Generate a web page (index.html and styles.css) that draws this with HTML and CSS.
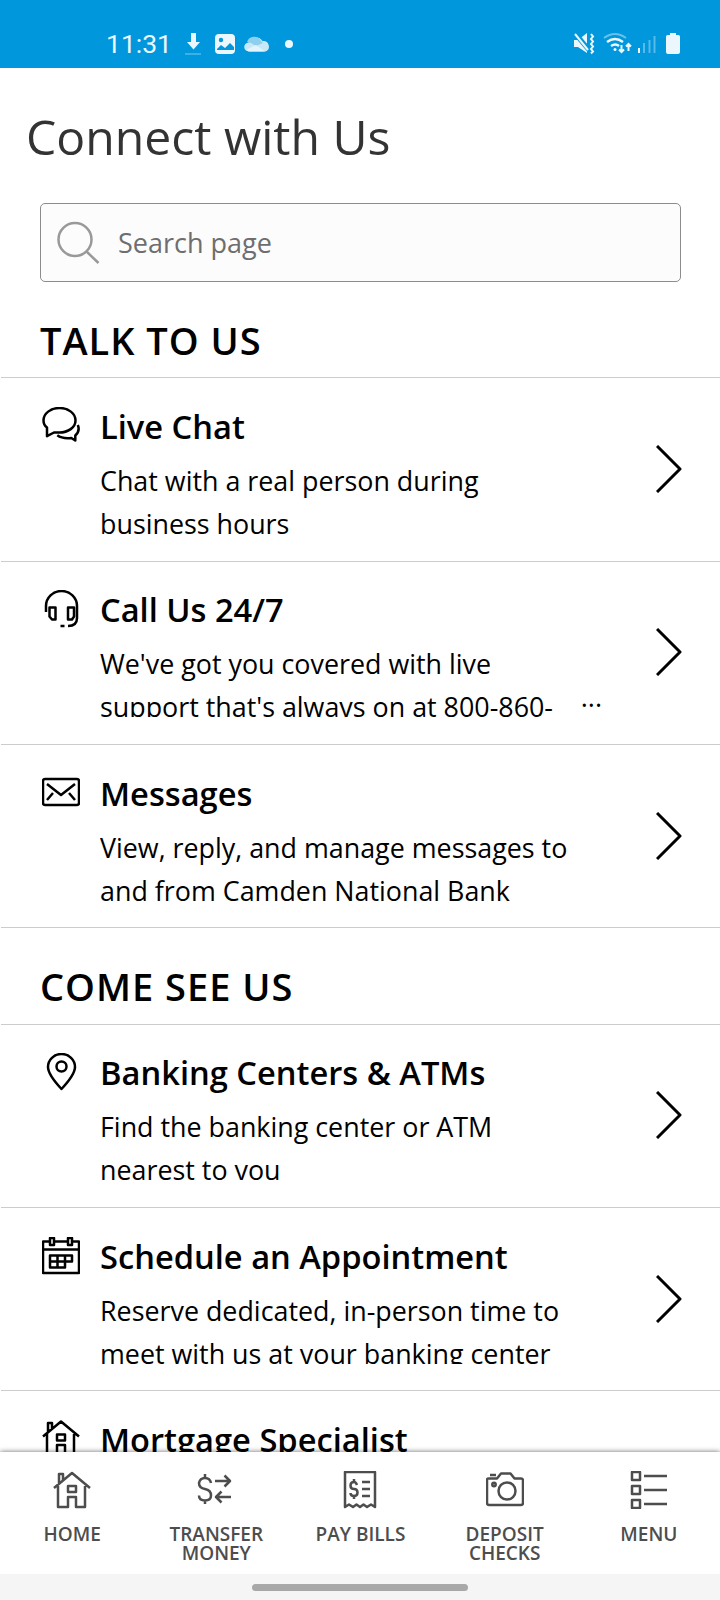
FILE: index.html
```html
<!DOCTYPE html>
<html lang="en">
<head>
  <meta charset="UTF-8">
  <meta name="viewport" content="width=device-width, initial-scale=1.0">
  <link rel="stylesheet" href="styles.css">
  <title>Connect with Us</title>
</head>
<body>
  <header class="status-bar">
    <div class="status-left">
      <span class="time">11:31</span>
      <svg width="136" height="24" viewBox="0 0 136 24">
        <path d="M7 1h5v9h4l-6.500 7.500L3 10h4z" fill="#ebf7fd"/>
        <path d="M1 22h16" stroke="#4db7e8" stroke-width="1.600"/>
        <rect x="31" y="2" width="20" height="20" rx="4" fill="#ebf7fd"/>
        <circle cx="37" cy="8" r="2.200" fill="#0197dd"/>
        <path d="M33 18v-1l4-4 4 3 5-5 4 4v3z" fill="#0197dd"/>
        <path d="M65 19.500a4.500 4.500 0 0 1-.5-9 8 8 0 0 1 14-1.500 5.500 5.500 0 0 1 3 10.500z" fill="#c8e8f7"/>
        <path d="M63 10a7.500 7.500 0 0 1 14-1l2 2-7 3-5-3z" fill="#8ecfee"/>
        <path d="M62 18l10-5 9 6.500H65z" fill="#e4f4fc"/>
        <circle cx="105" cy="12" r="4" fill="#ebf7fd"/>
      </svg>
    </div>
    <svg width="108" height="24" viewBox="0 0 108 24">
      <path d="M0 8h4l9-7v20l-9-6H0z" fill="#ebf7fd"/>
      <path d="M0 0l15 18" stroke="#0197dd" stroke-width="5"/>
      <path d="M1 2l13 16" stroke="#ebf7fd" stroke-width="2"/>
      <path d="M17 2l2 2.500-2 2.500 2 2.500-2 2.500 2 2.500-2 2.500 2 2.500-2 2" fill="none" stroke="#ebf7fd" stroke-width="2"/>
      <g fill="none" stroke-width="2">
        <path d="M30 6q11-8 22 0" stroke="#67c1eb"/>
        <path d="M33 10q8-6 16 0M37 14q4.500-3 8 0" stroke="#ebf7fd" stroke-width="2.400"/>
        <path d="M47.500 13v7M45 17.500l2.500 2.500 2.500-2.500M54.500 19v-7M52 14.500l2.500-2.500 2.500 2.500" stroke="#ebf7fd"/>
      </g>
      <circle cx="41" cy="17.500" r="1.500" fill="#ebf7fd"/>
      <path d="M65 16v5" stroke="#ebf7fd" stroke-width="2"/>
      <path d="M70 11v10M75.500 8v13M80.500 4v17" stroke="#57bae9" stroke-width="2"/>
      <path d="M96 1h6v2h2.500q1.500 0 1.500 1.500V20q0 2-2 2H94q-2 0-2-2V4.500Q92 3 93.500 3H96z" fill="#ebf7fd"/>
    </svg>
  </header>

  <main>
    <h1>Connect with Us</h1>
    <div class="search">
      <svg width="44" height="44" viewBox="0 0 44 44">
        <circle cx="19" cy="18.500" r="16.500"/>
        <path d="M30.500 30.500L42.500 42"/>
      </svg>
      <input type="text" placeholder="Search page" aria-label="Search page">
    </div>

    <h2>Talk to Us</h2>
    <ul>
      <li>
        <svg class="icon" viewBox="0 0 38 38">
          <path d="M5 20.500C3 19 1.500 16.500 1.500 13.500 1.500 6.500 8.500 1 17.500 1S33.500 6.500 33.500 13.500 26 25.500 17.500 25.500H12L5 29.200z"/>
          <path d="M35.800 18q2.500 6-2.500 10.500v5l-4-2.500q-9 1-14-2.700"/>
        </svg>
        <div class="text">
          <h3>Live Chat</h3>
          <p>Chat with a real person during business hours</p>
        </div>
        <svg class="chevron" viewBox="0 0 26 48"><path d="M1 1l23 23L1 47"/></svg>
      </li>
      <li>
        <svg class="icon" viewBox="0 0 38 38">
          <path d="M4 22v-6a15.500 15 0 0 1 31 0v12q0 8-9 8M18.500 36h4M7.500 17.500h6v12H10l-2.500-3zM32 17.500h-6v12h4l2-3z"/>
        </svg>
        <div class="text">
          <h3>Call Us 24/7</h3>
          <p>We've got you covered with live support that's always on at 800-860-</p>
          <span class="more">...</span>
        </div>
        <svg class="chevron" viewBox="0 0 26 48"><path d="M1 1l23 23L1 47"/></svg>
      </li>
      <li>
        <svg class="icon" viewBox="0 0 38 38">
          <rect x="1" y="5" width="36" height="26" rx="2"/>
          <path d="M5 10l14 11L33 10M5 26l6-7M33 26l-6-7"/>
        </svg>
        <div class="text">
          <h3>Messages</h3>
          <p>View, reply, and manage messages to and from Camden National Bank</p>
        </div>
        <svg class="chevron" viewBox="0 0 26 48"><path d="M1 1l23 23L1 47"/></svg>
      </li>
    </ul>

    <h2 class="second">Come See Us</h2>
    <ul>
      <li>
        <svg class="icon" viewBox="0 0 38 38">
          <path d="M19.500 36Q6 21.500 6 14a13.500 13 0 0 1 27 0Q33 21.500 19.500 36z"/>
          <circle cx="19.500" cy="13.500" r="5"/>
        </svg>
        <div class="text">
          <h3>Banking Centers &amp; ATMs</h3>
          <p>Find the banking center or ATM nearest to you</p>
        </div>
        <svg class="chevron" viewBox="0 0 26 48"><path d="M1 1l23 23L1 47"/></svg>
      </li>
      <li>
        <svg class="icon" viewBox="0 0 38 38">
          <path d="M8 4.500H1V36h36V4.500h-6M13 4.500h13M1 12.500h36M8 1h4v7H8zM26 1h4v7h-4z"/>
          <path d="M8 18.500h22v6H8zM8 24.500v6h15v-12M15.500 18.500v12"/>
        </svg>
        <div class="text">
          <h3>Schedule an Appointment</h3>
          <p>Reserve dedicated, in-person time to meet with us at your banking center</p>
        </div>
        <svg class="chevron" viewBox="0 0 26 48"><path d="M1 1l23 23L1 47"/></svg>
      </li>
      <li>
        <svg class="icon" viewBox="0 0 38 38">
          <path d="M1 16.500L19 1.500l18 15M6 12V3h4v6M5 14v21h10V25h8v10h9V14M15 14.500h8v6h-8z"/>
        </svg>
        <div class="text">
          <h3>Mortgage Specialist</h3>
        </div>
      </li>
    </ul>
  </main>

  <nav>
    <a>
      <svg viewBox="0 0 38 38"><path d="M1 17L19 2l18 15M6 13V3h4v6M5 15v21h10V26h8v10h9V15M15 15h8v6h-8z"/></svg>
      Home
    </a>
    <a>
      <svg viewBox="0 0 38 38"><path d="M14 12q-1-5-6-5t-6 5q0 5 6 6t6 6.500q0 5-6 5t-6-5M8 3v4M8 29.500V33M18 10h15M27.500 4.500L33 10l-5.500 5.500M34 26H19M24.500 20.500L19 26l5.500 5.500"/></svg>
      Transfer Money
    </a>
    <a>
      <svg viewBox="0 0 38 38"><path d="M4 36V1h30v35l-4-2.500-4 2.500-3.500-2.500L19 36l-3.500-2.500L12 36l-4-2.500zM16 14q-1-3-3-3-3.500 0-3.500 3.500T13 18t3.500 3.500T13 25t-3.500-3M13 8v3M13 25v3M21 11h8M21 18h8M21 25h8"/></svg>
      Pay Bills
    </a>
    <a>
      <svg viewBox="0 0 38 38"><path d="M1 8.500q0-1 2-1h8l4-5h9.500l4 5H35q2 0 2 2V32q0 2-2 2H3q-2 0-2-2zM4 4h6"/><circle cx="21" cy="20" r="8.500"/><circle cx="8" cy="13.500" r="1.700"/></svg>
      Deposit Checks
    </a>
    <a>
      <svg viewBox="0 0 38 38"><path d="M2 1h8v8H2zM2 15h8v8H2zM2 29h8v8H2zM14 5h23M14 19h23M14 33h23"/></svg>
      Menu
    </a>
  </nav>
  <footer><span></span></footer>
</body>
</html>
```
FILE: styles.css
```css
*, *::before, *::after {
  margin: 0;
  padding: 0;
  box-sizing: border-box;
}

body {
  display: flex;
  flex-direction: column;
  width: 720px;
  height: 1600px;
  overflow: hidden;
  background: #fff;
  color: #000;
  font-family: "Open Sans", "Noto Sans", sans-serif;
}

.status-bar {
  display: flex;
  justify-content: space-between;
  flex: none;
  height: 68px;
  padding: 32px 38px 0 106px;
  background: #0197dd;
}

.status-left {
  display: flex;
  gap: 14px;
}

.time {
  width: 64px;
  color: #ebf7fd;
  font: 26.500px/23px Roboto, sans-serif;
  white-space: nowrap;
}

main {
  flex: 1;
  min-height: 0;
  overflow: hidden;
}

h1 {
  padding: 36px 26px 0;
  color: #333;
  font-size: 48.100px;
  font-weight: 400;
  line-height: 66px;
}

.search {
  display: flex;
  align-items: center;
  height: 79px;
  margin: 33px 39px 0 40px;
  padding-left: 15px;
  border: 1px solid #8c8c8c;
  border-radius: 5px;
  background: #fcfcfc;
}

.search svg {
  fill: none;
  stroke: #999;
  stroke-width: 2.500;
}

.search input {
  flex: 1;
  margin-left: 18px;
  border: 0;
  background: none;
  font: 27px "Open Sans", sans-serif;
}

.search input::placeholder {
  color: #6e6e6e;
}

h2 {
  height: 95.400px;
  padding: 34px 40px 0;
  font-size: 38px;
  font-weight: 600;
  line-height: 48px;
  letter-spacing: 1px;
  text-transform: uppercase;
}

h2.second {
  height: 95.600px;
}

ul {
  list-style: none;
  margin-left: 1px;
  border-bottom: 1px solid #ccc;
}

li {
  display: flex;
  height: 183.300px;
  padding: 28.600px 38px 0 41px;
  border-top: 1px solid #ccc;
}

.icon {
  flex: none;
  width: 38px;
  height: 38px;
  margin-right: 20px;
}

.icon, .chevron, nav svg {
  fill: none;
  stroke: #000;
  stroke-width: 2.500;
  stroke-linejoin: round;
}

.text {
  position: relative;
  width: 506px;
  height: 127px;
  overflow: hidden;
}

h3 {
  height: 52px;
  font-size: 32.650px;
  font-weight: 600;
  line-height: 40.400px;
}

p {
  width: 480px;
  font-size: 26.850px;
  line-height: 43px;
}

.more {
  position: absolute;
  right: 4px;
  bottom: 2px;
  font-size: 27px;
}

.chevron {
  width: 26px;
  height: 48px;
  margin: 38px 0 0 auto;
}

.chevron path {
  stroke-width: 3;
}

nav {
  display: grid;
  grid-template-columns: repeat(5, 144.200px);
  flex: none;
  position: relative;
  height: 122px;
  padding-top: 19px;
  background: #fff;
  box-shadow: 0 0 5px rgba(0, 0, 0, .6);
}

nav a {
  display: flex;
  flex-direction: column;
  align-items: center;
  padding: 0 20px;
  color: #4d4d4d;
  font-size: 19px;
  font-weight: 600;
  line-height: 19px;
  text-align: center;
  text-transform: uppercase;
}

nav svg {
  width: 38px;
  height: 38px;
  margin-bottom: 16px;
  stroke: #4d4d4d;
}

footer {
  display: flex;
  justify-content: center;
  flex: none;
  position: relative;
  height: 26px;
  padding-top: 10px;
  background: #f5f5f5;
}

footer span {
  width: 216px;
  height: 7px;
  border-radius: 4px;
  background: #a8a8a8;
}
```
